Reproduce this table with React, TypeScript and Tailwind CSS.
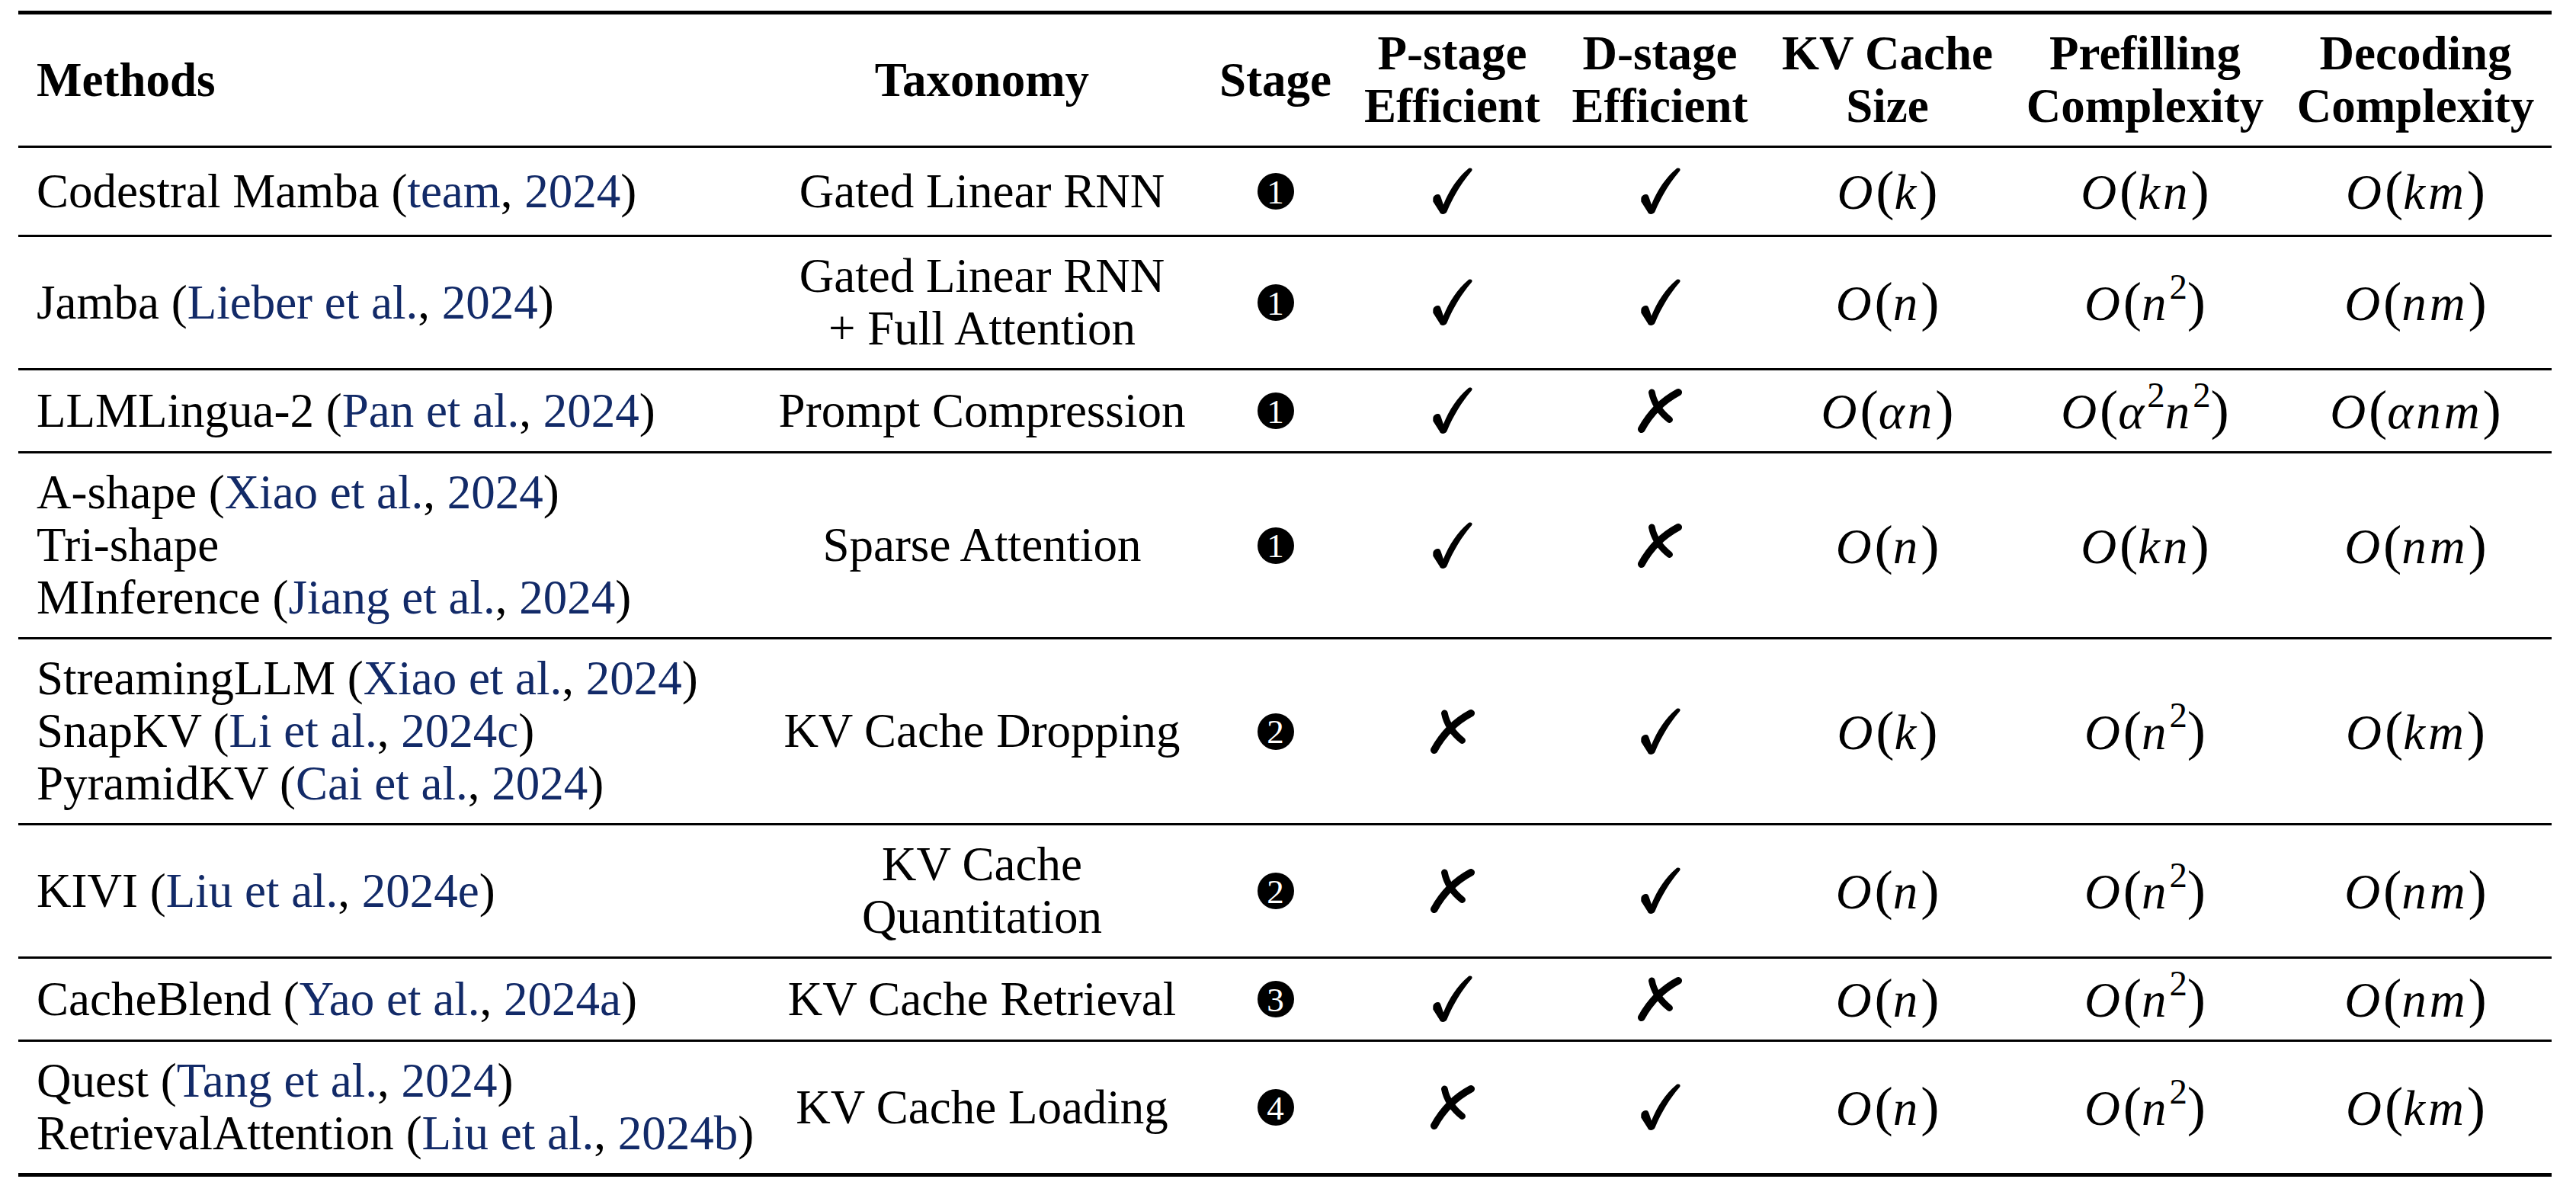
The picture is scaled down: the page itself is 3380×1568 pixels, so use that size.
import type { ReactNode } from "react";

const BLUE = "text-[#122a68]";

function Cite({ author, year }: { author: string; year: string }) {
  return (
    <>
      (<span className={BLUE}>{author}</span>, <span className={BLUE}>{year}</span>)
    </>
  );
}

function V({ children }: { children: ReactNode }) {
  return <span className="italic tracking-[0.06em]">{children}</span>;
}

function Big({ children }: { children: ReactNode }) {
  return <span className="text-[1.12em] font-light">{children}</span>;
}

function O({ children }: { children: ReactNode }) {
  return (
    <span className="whitespace-nowrap text-[65px]">
      <V>O</V>
      <Big>(</Big>
      {children}
      <Big>)</Big>
    </span>
  );
}

function Sq() {
  return <sup className="-top-[0.6em] text-[0.72em] not-italic">2</sup>;
}

function Stage({ n }: { n: number }) {
  return (
    <span className="inline-flex h-[48px] w-[48px] items-center justify-center rounded-full bg-black pt-[2px] text-[45px] leading-none text-white">
      {n}
    </span>
  );
}

function Check() {
  return (
    <svg viewBox="0 0 56 64" className="h-[62px] w-[55px]" aria-hidden>
      <path
        d="M2 42 C2 38 6 36 9 36 C11 36 12 38 13 41 L16 50 C24 30 36 13 49 2 C52 -1 57 1 54 5 C41 20 30 38 21 59 C19 64 12 64 11 60 L2 46 Z"
        fill="black"
      />
    </svg>
  );
}

function Cross() {
  return (
    <svg viewBox="0 0 62 60" className="h-[58px] w-[60px]" aria-hidden>
      <path d="M6 55 Q24 22 56 5" stroke="black" strokeWidth="10" strokeLinecap="round" fill="none" />
      <path d="M20 5 Q24 26 44 42" stroke="black" strokeWidth="9" strokeLinecap="round" fill="none" />
    </svg>
  );
}

type Row = {
  methods: ReactNode[];
  taxonomy: string[];
  stage: number;
  p: boolean;
  d: boolean;
  kv: ReactNode;
  pre: ReactNode;
  dec: ReactNode;
  pad?: string;
};

const rows: Row[] = [
  {
    methods: [<>Codestral Mamba <Cite author="team" year="2024" /></>],
    taxonomy: ["Gated Linear RNN"],
    stage: 1,
    p: true,
    d: true,
    kv: <O><V>k</V></O>,
    pre: <O><V>kn</V></O>,
    dec: <O><V>km</V></O>,
    pad: "py-[21px]",
  },
  {
    methods: [<>Jamba <Cite author="Lieber et al." year="2024" /></>],
    taxonomy: ["Gated Linear RNN", "+ Full Attention"],
    stage: 1,
    p: true,
    d: true,
    kv: <O><V>n</V></O>,
    pre: <O><V>n</V><Sq /></O>,
    dec: <O><V>nm</V></O>,
  },
  {
    methods: [<>LLMLingua-2 <Cite author="Pan et al." year="2024" /></>],
    taxonomy: ["Prompt Compression"],
    stage: 1,
    p: true,
    d: false,
    kv: <O><V>αn</V></O>,
    pre: <O><V>α</V><Sq /><V>n</V><Sq /></O>,
    dec: <O><V>αnm</V></O>,
  },
  {
    methods: [
      <>A-shape <Cite author="Xiao et al." year="2024" /></>,
      <>Tri-shape</>,
      <>MInference <Cite author="Jiang et al." year="2024" /></>,
    ],
    taxonomy: ["Sparse Attention"],
    stage: 1,
    p: true,
    d: false,
    kv: <O><V>n</V></O>,
    pre: <O><V>kn</V></O>,
    dec: <O><V>nm</V></O>,
  },
  {
    methods: [
      <>StreamingLLM <Cite author="Xiao et al." year="2024" /></>,
      <>SnapKV <Cite author="Li et al." year="2024c" /></>,
      <>PyramidKV <Cite author="Cai et al." year="2024" /></>,
    ],
    taxonomy: ["KV Cache Dropping"],
    stage: 2,
    p: false,
    d: true,
    kv: <O><V>k</V></O>,
    pre: <O><V>n</V><Sq /></O>,
    dec: <O><V>km</V></O>,
  },
  {
    methods: [<>KIVI <Cite author="Liu et al." year="2024e" /></>],
    taxonomy: ["KV Cache", "Quantitation"],
    stage: 2,
    p: false,
    d: true,
    kv: <O><V>n</V></O>,
    pre: <O><V>n</V><Sq /></O>,
    dec: <O><V>nm</V></O>,
  },
  {
    methods: [<>CacheBlend <Cite author="Yao et al." year="2024a" /></>],
    taxonomy: ["KV Cache Retrieval"],
    stage: 3,
    p: true,
    d: false,
    kv: <O><V>n</V></O>,
    pre: <O><V>n</V><Sq /></O>,
    dec: <O><V>nm</V></O>,
  },
  {
    methods: [
      <>Quest <Cite author="Tang et al." year="2024" /></>,
      <>RetrievalAttention <Cite author="Liu et al." year="2024b" /></>,
    ],
    taxonomy: ["KV Cache Loading"],
    stage: 4,
    p: false,
    d: true,
    kv: <O><V>n</V></O>,
    pre: <O><V>n</V><Sq /></O>,
    dec: <O><V>km</V></O>,
  },
];

const grid =
  "grid grid-cols-[976px_577px_193px_271px_274px_323px_353px_357px]";
const cell = "flex items-center justify-center text-center";

function Lines({ lines }: { lines: ReactNode[] }) {
  return (
    <div>
      {lines.map((l, i) => (
        <div key={i} className="whitespace-nowrap">
          {l}
        </div>
      ))}
    </div>
  );
}

export default function App() {
  return (
    <div className="h-[1568px] w-[3380px] bg-white pl-[24px] pt-[14px] font-['Liberation_Serif','Times_New_Roman',serif] text-[63px] leading-[69px] text-black">
      <div className="w-[3324px] border-y-[5px] border-black">
        <div className={`${grid} border-b-[3px] border-black py-[17px] font-bold`}>
          <div className="flex items-center pl-[24px]">Methods</div>
          <div className={cell}>Taxonomy</div>
          <div className={cell}>Stage</div>
          <div className={cell}>
            <Lines lines={["P-stage", "Efficient"]} />
          </div>
          <div className={cell}>
            <Lines lines={["D-stage", "Efficient"]} />
          </div>
          <div className={cell}>
            <Lines lines={["KV Cache", "Size"]} />
          </div>
          <div className={cell}>
            <Lines lines={["Prefilling", "Complexity"]} />
          </div>
          <div className={cell}>
            <Lines lines={["Decoding", "Complexity"]} />
          </div>
        </div>

        {rows.map((r, i) => (
          <div
            key={i}
            className={`${grid} ${r.pad ?? "py-[17px]"} ${
              i < rows.length - 1 ? "border-b-[3px] border-black" : ""
            }`}
          >
            <div className="flex items-center pl-[24px]">
              <Lines lines={r.methods} />
            </div>
            <div className={cell}>
              <Lines lines={r.taxonomy} />
            </div>
            <div className={cell}>
              <Stage n={r.stage} />
            </div>
            <div className={cell}>{r.p ? <Check /> : <Cross />}</div>
            <div className={cell}>{r.d ? <Check /> : <Cross />}</div>
            <div className={cell}>{r.kv}</div>
            <div className={cell}>{r.pre}</div>
            <div className={cell}>{r.dec}</div>
          </div>
        ))}
      </div>
    </div>
  );
}
